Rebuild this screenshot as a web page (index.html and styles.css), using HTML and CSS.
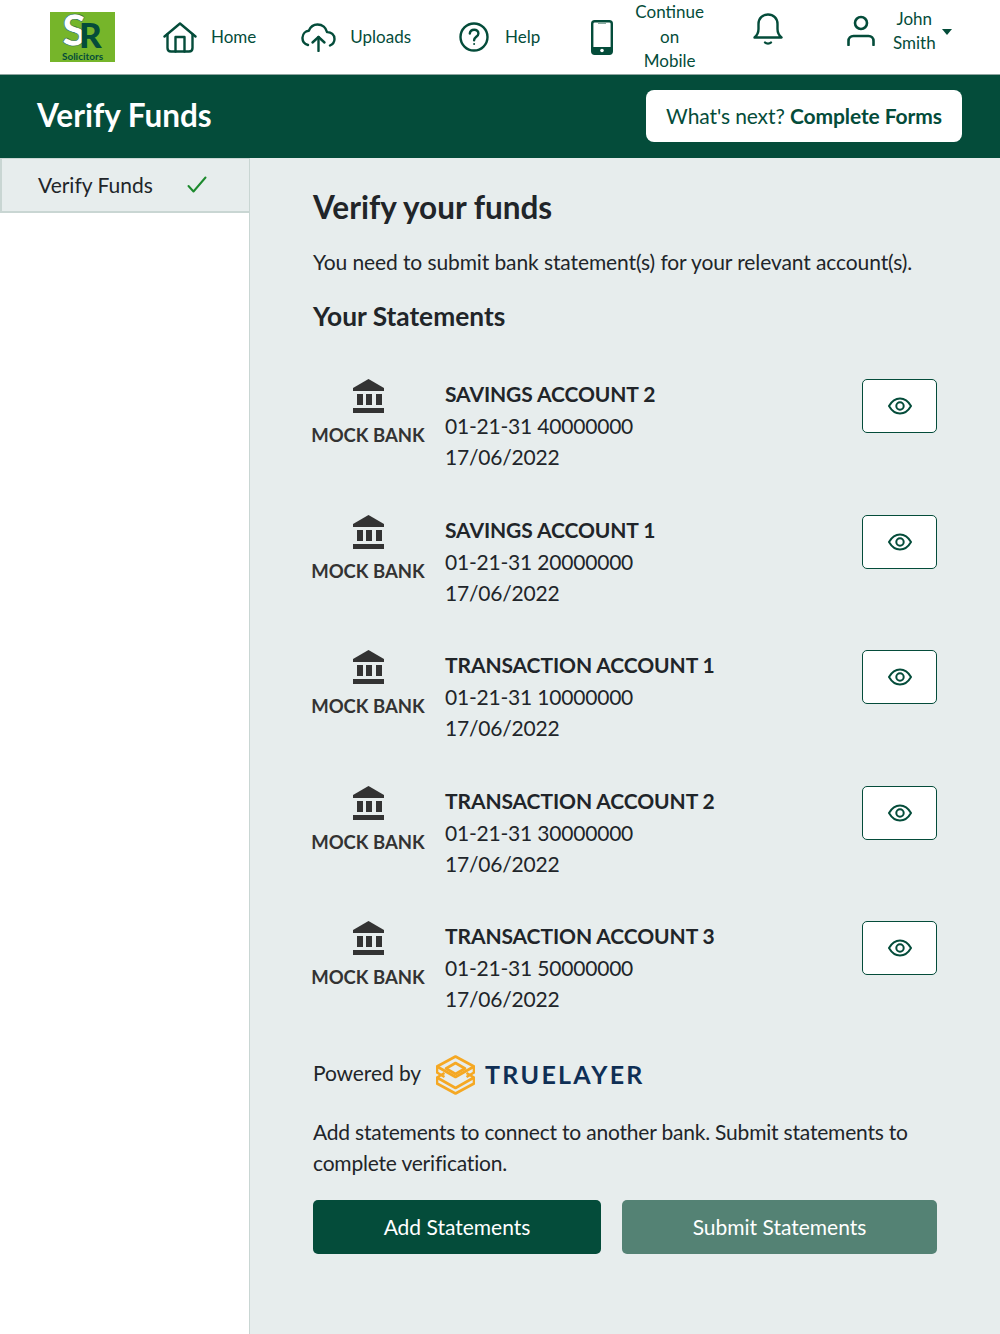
FILE: index.html
```html
<!DOCTYPE html>
<html lang="en">
<head>
    <meta charset="UTF-8">
    <title>Verify Funds</title>
    <link rel="stylesheet" href="styles.css">
</head>
<body>
    <!-- Top nav -->
    <nav class="topnav">
        <svg class="logo" width="65" height="50" viewBox="0 0 65 50">
            <rect width="65" height="50" fill="#76b52a"/>
            <text class="logo-s" x="12" y="34">S</text>
            <text class="logo-r" x="29" y="36">R</text>
            <text class="logo-text" x="32.500" y="48" text-anchor="middle">Solicitors</text>
        </svg>
        <a class="nav-item nav-home">
            <svg width="34" height="31" viewBox="0 0 34 31" fill="none" stroke="#044c3a" stroke-width="2.400" stroke-linecap="round" stroke-linejoin="round"><path d="M1.500 14.500 17 1.500l15.500 13"/><path d="M4.500 12.500V26q0 3.500 3.500 3.500h18q3.500 0 3.500-3.500V12.500"/><path d="M12.500 29.500V15h9v14.500"/></svg>
            <span>Home</span>
        </a>
        <a class="nav-item nav-uploads">
            <svg width="35" height="29" viewBox="0 0 35 29" fill="none" stroke="#044c3a" stroke-width="2.400" stroke-linecap="round" stroke-linejoin="round"><path d="M7 22C3 21 1.300 18 1.500 14.500 1.800 10.500 4.500 8 7.800 7.800 9.500 3.500 13 1.500 16.500 1.500c5 0 8.600 3.300 9.500 7.600 4.300-.2 7.500 2.800 7.500 6.800 0 3-1.800 5.300-4.500 6.600"/><path d="M17.500 28V14"/><path d="M11.500 19.500l6-5.500 6 5.500"/></svg>
            <span>Uploads</span>
        </a>
        <a class="nav-item nav-help">
            <svg width="30" height="30" viewBox="0 0 30 30" fill="none" stroke="#044c3a" stroke-width="2.400" stroke-linecap="round"><circle cx="15" cy="15" r="13.500"/><path d="M10.800 11.500c.3-2.500 2.200-3.800 4.400-3.800 2.400 0 4.200 1.500 4.200 3.700 0 3.300-4.300 3.400-4.300 6.800"/><circle cx="15.100" cy="22" r="1" fill="#044c3a" stroke="none"/></svg>
            <span>Help</span>
        </a>
        <a class="nav-item nav-mobile">
            <svg width="22" height="35" viewBox="0 0 22 35" fill="none"><rect x="1.200" y="1.200" width="19.600" height="32.600" rx="2.500" stroke="#044c3a" stroke-width="2.400"/><rect x="1" y="27" width="20" height="7" fill="#044c3a"/><rect x="7" y="2.500" width="8" height="1.400" fill="#7ea398"/><circle cx="11" cy="30.500" r="1.800" fill="#fff"/></svg>
            <span>Continue<br>on<br>Mobile</span>
        </a>
        <a class="nav-bell">
            <svg width="30" height="33" viewBox="0 0 30 33" fill="none" stroke="#044c3a" stroke-width="2.400" stroke-linecap="round" stroke-linejoin="round"><path d="M1.500 24.500c3-2.500 4-4.500 4-8.500V11C5.500 5.500 9.500 1.500 15 1.500S24.500 5.500 24.500 11v5c0 4 1 6 4 8.500z"/><path d="M12 29.500c1.500 1.500 4.500 1.500 6 0"/></svg>
        </a>
        <a class="nav-item nav-user">
            <svg width="28" height="31" viewBox="0 0 28 31" fill="none" stroke="#044c3a" stroke-width="2.600" stroke-linecap="round"><circle cx="14" cy="8" r="6"/><path d="M1.500 30v-4c0-3 2-5 5-5h15c3 0 5 2 5 5v4"/></svg>
            <span class="user-name">John<br>Smith</span>
            <i class="caret"></i>
        </a>
    </nav>

    <!-- Green page header -->
    <header class="page-head">
        <h1>Verify Funds</h1>
        <a class="next-btn">What's next? <b>Complete Forms</b></a>
    </header>

    <div class="layout">
        <aside class="sidebar">
            <div class="side-item">
                <span>Verify Funds</span>
                <svg width="20" height="17" viewBox="0 0 20 17" fill="none" stroke="#1d8a2e" stroke-width="2" stroke-linecap="round" stroke-linejoin="round"><path d="M1.500 10l5 5.500L18.500 1.500"/></svg>
            </div>
        </aside>

        <main class="content">
            <h2>Verify your funds</h2>
            <p class="intro">You need to submit bank statement(s) for your relevant account(s).</p>
            <h3>Your Statements</h3>

            <div class="statement">
                <div class="bank">
                    <svg width="31" height="34" viewBox="0 0 31 34" fill="#333"><path d="M15.500 0 31 9v3H0V9z"/><rect x="4" y="15" width="6" height="11"/><rect x="13" y="15" width="6" height="11"/><rect x="23" y="15" width="6" height="11"/><rect y="29" width="31" height="5"/></svg>
                    <div class="bank-name">MOCK BANK</div>
                </div>
                <div class="details">
                    <div class="acc-name">SAVINGS ACCOUNT 2</div>
                    <div class="acc-line">01-21-31 40000000</div>
                    <div class="acc-line">17/06/2022</div>
                </div>
                <button class="view-btn"><svg width="24" height="18" viewBox="0 0 24 18" fill="none" stroke="#044c3a" stroke-width="2"><path d="M1 9C4 3.800 7.500 1.500 12 1.500S20 3.800 23 9C20 14.200 16.500 16.500 12 16.500S4 14.200 1 9z"/><circle cx="12" cy="9" r="3.700"/></svg></button>
            </div>

            <div class="statement">
                <div class="bank">
                    <svg width="31" height="34" viewBox="0 0 31 34" fill="#333"><path d="M15.500 0 31 9v3H0V9z"/><rect x="4" y="15" width="6" height="11"/><rect x="13" y="15" width="6" height="11"/><rect x="23" y="15" width="6" height="11"/><rect y="29" width="31" height="5"/></svg>
                    <div class="bank-name">MOCK BANK</div>
                </div>
                <div class="details">
                    <div class="acc-name">SAVINGS ACCOUNT 1</div>
                    <div class="acc-line">01-21-31 20000000</div>
                    <div class="acc-line">17/06/2022</div>
                </div>
                <button class="view-btn"><svg width="24" height="18" viewBox="0 0 24 18" fill="none" stroke="#044c3a" stroke-width="2"><path d="M1 9C4 3.800 7.500 1.500 12 1.500S20 3.800 23 9C20 14.200 16.500 16.500 12 16.500S4 14.200 1 9z"/><circle cx="12" cy="9" r="3.700"/></svg></button>
            </div>

            <div class="statement">
                <div class="bank">
                    <svg width="31" height="34" viewBox="0 0 31 34" fill="#333"><path d="M15.500 0 31 9v3H0V9z"/><rect x="4" y="15" width="6" height="11"/><rect x="13" y="15" width="6" height="11"/><rect x="23" y="15" width="6" height="11"/><rect y="29" width="31" height="5"/></svg>
                    <div class="bank-name">MOCK BANK</div>
                </div>
                <div class="details">
                    <div class="acc-name">TRANSACTION ACCOUNT 1</div>
                    <div class="acc-line">01-21-31 10000000</div>
                    <div class="acc-line">17/06/2022</div>
                </div>
                <button class="view-btn"><svg width="24" height="18" viewBox="0 0 24 18" fill="none" stroke="#044c3a" stroke-width="2"><path d="M1 9C4 3.800 7.500 1.500 12 1.500S20 3.800 23 9C20 14.200 16.500 16.500 12 16.500S4 14.200 1 9z"/><circle cx="12" cy="9" r="3.700"/></svg></button>
            </div>

            <div class="statement">
                <div class="bank">
                    <svg width="31" height="34" viewBox="0 0 31 34" fill="#333"><path d="M15.500 0 31 9v3H0V9z"/><rect x="4" y="15" width="6" height="11"/><rect x="13" y="15" width="6" height="11"/><rect x="23" y="15" width="6" height="11"/><rect y="29" width="31" height="5"/></svg>
                    <div class="bank-name">MOCK BANK</div>
                </div>
                <div class="details">
                    <div class="acc-name">TRANSACTION ACCOUNT 2</div>
                    <div class="acc-line">01-21-31 30000000</div>
                    <div class="acc-line">17/06/2022</div>
                </div>
                <button class="view-btn"><svg width="24" height="18" viewBox="0 0 24 18" fill="none" stroke="#044c3a" stroke-width="2"><path d="M1 9C4 3.800 7.500 1.500 12 1.500S20 3.800 23 9C20 14.200 16.500 16.500 12 16.500S4 14.200 1 9z"/><circle cx="12" cy="9" r="3.700"/></svg></button>
            </div>

            <div class="statement">
                <div class="bank">
                    <svg width="31" height="34" viewBox="0 0 31 34" fill="#333"><path d="M15.500 0 31 9v3H0V9z"/><rect x="4" y="15" width="6" height="11"/><rect x="13" y="15" width="6" height="11"/><rect x="23" y="15" width="6" height="11"/><rect y="29" width="31" height="5"/></svg>
                    <div class="bank-name">MOCK BANK</div>
                </div>
                <div class="details">
                    <div class="acc-name">TRANSACTION ACCOUNT 3</div>
                    <div class="acc-line">01-21-31 50000000</div>
                    <div class="acc-line">17/06/2022</div>
                </div>
                <button class="view-btn"><svg width="24" height="18" viewBox="0 0 24 18" fill="none" stroke="#044c3a" stroke-width="2"><path d="M1 9C4 3.800 7.500 1.500 12 1.500S20 3.800 23 9C20 14.200 16.500 16.500 12 16.500S4 14.200 1 9z"/><circle cx="12" cy="9" r="3.700"/></svg></button>
            </div>

            <div class="powered">
                <span class="powered-by">Powered by</span>
                <svg width="39" height="40" viewBox="0 0 39 40" fill="none" stroke="#f5a823" stroke-width="2.600" stroke-linejoin="round"><path d="M19.500 1.500 38 11.500 19.500 22 1 11.500z"/><path d="M19.500 8 29 13.500 19.500 19 10 13.500z"/><path d="M1 11.500v6l7.500 4.500M38 11.500v6L30.500 22"/><path d="M8.500 18 1 22.500 19.500 33 38 22.500 30.500 18"/><path d="M1 22.500v6L19.500 38.500 38 28.500v-6"/></svg>
                <span class="tl-name">TRUELAYER</span>
            </div>

            <p class="note">Add statements to connect to another bank. Submit statements to complete verification.</p>

            <div class="actions">
                <button class="btn btn-add">Add Statements</button>
                <button class="btn btn-submit">Submit Statements</button>
            </div>
        </main>
    </div>
</body>
</html>
```

FILE: styles.css
```css
* {
    box-sizing: border-box;
}
body {
    font-family: Lato, "Open Sans", sans-serif;
    margin: 0;
    background: white;
    color: #212529;
}

/* top nav */
.topnav {
    display: flex;
    align-items: center;
    height: 75px;
    padding-left: 50px;
    border-bottom: 1px solid #8fa5a0;
    color: #044c3a;
    font-size: 17px;
    line-height: 24.500px;
}
.logo {
    flex: none;
    overflow: visible;
    font-family: Lato, sans-serif;
}
.logo-s {
    fill: white;
    stroke: #1f6b45;
    stroke-width: .6px;
    font-size: 44px;
    font-weight: 900;
}
.logo-r {
    fill: #044c3a;
    font-size: 35px;
    font-weight: 900;
}
.logo-text {
    fill: #044c3a;
    font-size: 10px;
    font-weight: 700;
}
.nav-item {
    display: flex;
    align-items: center;
    text-align: center;
    gap: 14px;
}
.nav-home {
    margin-left: 48px;
}
.nav-uploads {
    margin-left: 45px;
}
.nav-help {
    margin-left: 48px;
    gap: 16px;
}
.nav-mobile {
    margin-left: 51px;
    gap: 22px;
}
.nav-bell {
    display: flex;
    margin-left: 49px;
    margin-bottom: 16px;
}
.nav-user {
    margin-left: 64px;
    gap: 18px;
}
.nav-user svg {
    margin-bottom: 14px;
}
.user-name {
    margin-bottom: 12px;
}
.caret {
    width: 0;
    height: 0;
    margin: 0 0 10px -12px;
    border-left: 5.500px solid transparent;
    border-right: 5.500px solid transparent;
    border-top: 6px solid #044c3a;
}

/* green header */
.page-head {
    display: flex;
    align-items: center;
    justify-content: space-between;
    height: 83px;
    background: #044c3a;
    padding: 0 38px 2px 37px;
}
.page-head h1 {
    margin: 0 0 1px;
    color: white;
    font-size: 31.500px;
    font-weight: 700;
}
.next-btn {
    display: block;
    width: 316px;
    height: 52px;
    line-height: 52px;
    text-align: center;
    background: white;
    border-radius: 8px;
    color: #044c3a;
    font-size: 21px;
    letter-spacing: -.1px;
}

.layout {
    display: flex;
    min-height: 1177px;
}
.sidebar {
    width: 250px;
    flex: none;
    border-right: 1px solid #c9d6d3;
}
.side-item {
    display: flex;
    align-items: center;
    gap: 34px;
    height: 55px;
    padding: 0 0 2px 36px;
    background: #e7eded;
    border: 1px solid #c9d6d3;
    border-width: 1px 0 2px 2px;
    font-size: 21px;
}
.content {
    flex: 1;
    background: #e7eded;
    padding: 29px 63px 0 63px;
    font-size: 21px;
    line-height: 31px;
    letter-spacing: -.1px;
}
.content h2 {
    margin: 0;
    font-size: 31.500px;
    line-height: 40px;
    font-weight: 700;
    letter-spacing: 0;
}
.intro {
    margin: 19px 0 0;
}
.content h3 {
    margin: 24px 0 0;
    font-size: 26.300px;
    line-height: 31px;
    font-weight: 700;
    letter-spacing: 0;
}

.statement {
    display: flex;
    align-items: flex-start;
    height: 135.500px;
}
.content h3 + .statement {
    margin-top: 47px;
}
.bank {
    width: 134px;
    flex: none;
    padding-right: 20px;
    margin-left: -2px;
    text-align: center;
    line-height: 1;
    letter-spacing: 0;
}
.bank svg {
    display: block;
    margin: 0 auto;
}
.bank-name {
    margin-top: 10px;
    font-size: 18.500px;
    line-height: 24px;
    font-weight: 700;
    color: #333;
    white-space: nowrap;
}
.details {
    flex: 1;
}
.acc-name {
    margin: -1px 0 1px;
    font-weight: 700;
    letter-spacing: -.1px;
}
.acc-line {
    letter-spacing: -.2px;
}
.view-btn {
    display: flex;
    align-items: center;
    justify-content: center;
    width: 75px;
    height: 54px;
    padding: 0;
    background: white;
    border: 1px solid #044c3a;
    border-radius: 5px;
}

.powered {
    display: flex;
    align-items: center;
    height: 40px;
    margin-top: -2px;
}
.powered-by {
    margin-bottom: 4px;
}
.powered svg {
    margin-left: 15px;
}
.tl-name {
    margin-left: 10px;
    font-size: 25px;
    font-weight: 700;
    letter-spacing: 2.300px;
    color: #0f2f55;
}
.note {
    margin: 21px 0 0;
    letter-spacing: -.2px;
}
.actions {
    display: flex;
    gap: 21px;
    margin-top: 22px;
}
.btn {
    height: 54px;
    border: none;
    border-radius: 5px;
    color: white;
    font-family: inherit;
    font-size: 21px;
}
.btn-add {
    width: 288px;
    background: #044c3a;
}
.btn-submit {
    flex: 1;
    background: #548274;
}
```
